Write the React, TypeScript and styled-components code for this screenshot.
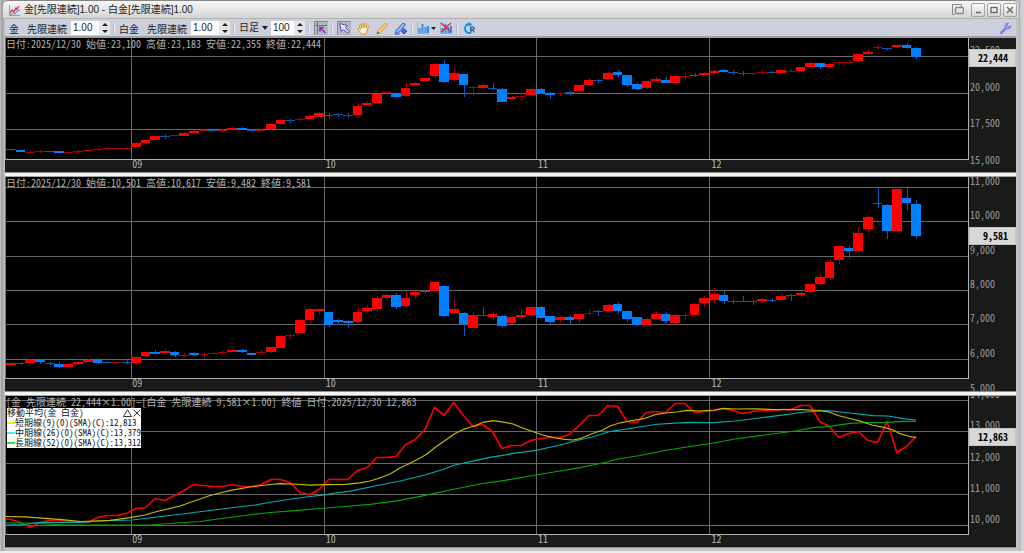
import React from "react";
import styled, { createGlobalStyle } from "styled-components";

const GlobalStyle = createGlobalStyle`
  * { box-sizing: border-box; }
  body { margin: 0; background: #cfcfd9; }
  button, input, select { font: inherit; color: inherit; padding: 0; margin: 0; border: 0; background: none; }
`;

const mono = `"Noto Sans Mono CJK JP", "Noto Sans CJK JP", monospace`;
const ui = `"Liberation Sans", "Noto Sans CJK JP", sans-serif`;

/* ---------- window frame ---------- */

const Window = styled.div`
  display: flex;
  flex-direction: column;
  height: 100vh;
  min-height: 400px;
  padding: 0 8px 4px 5px;
  background: linear-gradient(90deg, #c9c9c9 0, #9c9c9c 2px, #b9b9b9 4px, #c2c2c2 5px, #c2c2c2 calc(100% - 5px), #a4a4a4 calc(100% - 5px), #cfcfda calc(100% - 3px));
  border-bottom: 2px solid #ededed;
  font-family: ${ui};
  font-size: 10px;
  color: #222;
`;

const TitleBar = styled.header`
  display: flex;
  flex: none;
  align-items: center;
  gap: 4px;
  height: 19px;
  margin: 0 -2px;
  padding: 1px 0 0 6px;
  border-top: 1px solid #858585;
  border-bottom: 1px solid #b2b2b2;
  border-radius: 5px 5px 0 0;
  background: linear-gradient(#f6f6f6, #e6e6e6 50%, #d3d3d3);
`;

const Title = styled.h1`
  flex: 1;
  margin: 0;
  font-size: 10px;
  line-height: 16px;
  font-weight: 400;
  white-space: pre;
`;

const WindowButtons = styled.div`
  display: flex;
  align-items: center;
  gap: 2px;
  padding-right: 1px;
`;

const WindowButton = styled.button<{ $flat?: boolean }>`
  display: grid;
  place-items: center;
  width: 14px;
  height: 14px;
  margin-right: ${(p) => (p.$flat ? "4px" : "0")};
  border: ${(p) => (p.$flat ? "0" : "1px solid #a2a2a2")};
  border-radius: 2px;
  background: ${(p) => (p.$flat ? "none" : "linear-gradient(#fafafa, #d6d6d6)")};
`;

/* ---------- toolbar ---------- */

const Toolbar = styled.div`
  display: flex;
  flex: none;
  align-items: center;
  height: 19px;
  padding: 0 4px;
  background: #cdd0da;
  border-bottom: 1px solid #ececf0;
  box-shadow: inset 0 -1px #9a9da8;
`;

const Group = styled.div<{ $gap?: number }>`
  display: flex;
  align-items: center;
  gap: ${(p) => p.$gap ?? 4}px;
`;

const Divider = styled.span`
  width: 2px;
  height: 11px;
  margin: 0 4px 0 3px;
  border-left: 1px solid #b4b7c0;
  border-right: 1px solid #eceef3;
`;

const FieldLabel = styled.label`
  display: flex;
  gap: 8px;
  white-space: nowrap;
`;

const SpinBox = styled.div<{ $width: number }>`
  display: flex;
  width: ${(p) => p.$width}px;
  height: 14px;
  background: #fff;
`;

const SpinInput = styled.input`
  flex: 1;
  min-width: 0;
  padding-left: 2px;
  line-height: 12px;
`;

const SpinButtons = styled.div`
  display: flex;
  flex-direction: column;
  width: 11px;
  background: #e4e4e4;
`;

const SpinButton = styled.button`
  display: grid;
  flex: 1;
  place-items: center;
`;

const PeriodSelect = styled.select`
  appearance: none;
  width: 31px;
  height: 14px;
  line-height: 14px;
  background: url("data:image/svg+xml,%3Csvg xmlns='http://www.w3.org/2000/svg' width='6' height='4'%3E%3Cpath d='M0 0h6L3 4z' fill='%23222'/%3E%3C/svg%3E") no-repeat 23px 5px;
`;

const ToolButton = styled.button<{ $pressed?: boolean }>`
  display: grid;
  grid-auto-flow: column;
  place-items: center;
  gap: 2px;
  min-width: 14px;
  height: 14px;
  background: ${(p) => (p.$pressed ? "#b4b7c2" : "none")};
  box-shadow: ${(p) => (p.$pressed ? "inset 1px 1px #878a94" : "none")};
`;

const Spacer = styled.span`
  flex: 1;
`;

/* ---------- charts ---------- */

const Panels = styled.main`
  display: flex;
  flex: 1;
  flex-direction: column;
  gap: 5px;
  min-height: 0;
  background: #f4f4f4;
`;

const Panel = styled.section<{ $grow: number }>`
  display: grid;
  grid-template-columns: minmax(0, 1fr) 47px;
  flex: ${(p) => p.$grow} 1 0;
  min-height: 0;
  background: #1a1a1a;
  box-shadow: 0 1px #8e8e8e, 0 -1px #a4a4a4;
  font-family: ${mono};
  font-size: 10px;
  line-height: 12px;
  color: #b4b4b4;
`;

const PlotColumn = styled.div`
  display: flex;
  flex-direction: column;
  min-width: 0;
  min-height: 0;
`;

const Plot = styled.div`
  position: relative;
  flex: 1;
  min-height: 0;
  background: #000;
  border-right: 1px solid #b0b0b0;
  border-bottom: 1px solid #b0b0b0;
  border-left: 1px solid #777;
`;

const Drawing = styled.svg`
  position: absolute;
  inset: 0;
  display: block;
  width: 100%;
  height: 100%;
`;

const Caption = styled.h2`
  position: absolute;
  top: 0;
  left: 0;
  margin: 0;
  font-size: 10px;
  line-height: 12px;
  font-weight: 400;
  white-space: pre;
`;

const TimeAxis = styled.div`
  position: relative;
  flex: none;
  height: 12px;
`;

const TimeLabel = styled.span`
  position: absolute;
  top: -2px;
`;

const PriceAxis = styled.div`
  position: relative;
  overflow: hidden;
`;

const PriceLabel = styled.span`
  position: absolute;
  left: 1px;
  transform: translateY(-50%);
  color: #9c9c9c;
`;

const PriceTag = styled.strong`
  position: absolute;
  left: 0;
  right: 0;
  transform: translateY(-50%);
  padding: 2px 7px 2px 0;
  border: 1px solid #c4c4c4;
  background: #d8d8d8;
  color: #000;
  line-height: 12px;
  text-align: right;
`;

const Legend = styled.aside`
  position: absolute;
  top: 12px;
  left: 1px;
  background: #fff;
  color: #111;
  font-size: 9px;
`;

const LegendRow = styled.div`
  display: flex;
  align-items: center;
  height: 10px;
  line-height: 10px;
  white-space: pre;
`;

const LegendTitle = styled.span`
  flex: 1;
`;

const LegendButton = styled.button`
  display: grid;
  place-items: center;
  width: 9px;
  height: 9px;
`;

const Swatch = styled.span<{ $color: string }>`
  flex: none;
  width: 8px;
  height: 2px;
  background: ${(p) => p.$color};
`;

/* ---------- data ---------- */

/* Session: direction, body top, body bottom, wick top, wick bottom */
type Candle = [0 | 1, number, number, number, number];
const U = 1;
const D = 0;

const gold: Candle[] = [
  [D, 149, 150, 149, 151], [D, 150, 152, 150, 152], [U, 152, 153, 151, 153], [U, 151, 152, 150, 153], [D, 151, 152, 151, 152],
  [D, 151, 153, 151, 154], [U, 152, 153, 152, 153], [U, 151, 152, 150, 153], [U, 150, 151, 150, 151], [U, 149, 150, 148, 151],
  [U, 148, 149, 147, 149], [U, 148, 149, 148, 149], [U, 148, 149, 147, 149], [U, 143, 147, 142, 147], [U, 140, 143, 140, 143],
  [U, 136, 140, 135, 140], [D, 136, 137, 134, 139], [U, 135, 136, 135, 136], [U, 133, 136, 132, 136], [U, 131, 133, 130, 133],
  [U, 130, 131, 129, 132], [D, 130, 131, 130, 131], [U, 130, 131, 129, 132], [U, 128, 130, 127, 130], [D, 128, 130, 127, 130],
  [D, 130, 131, 129, 132], [U, 130, 131, 129, 131], [U, 124, 129, 124, 130], [U, 120, 124, 119, 125], [D, 120, 121, 119, 123],
  [U, 119, 120, 118, 121], [U, 116, 119, 115, 119], [U, 113, 117, 112, 117], [D, 115, 116, 113, 119], [D, 114, 115, 113, 117],
  [D, 115, 116, 113, 118], [U, 106, 115, 104, 115], [U, 103, 105, 101, 106], [U, 94, 103, 94, 104], [U, 92, 93, 92, 95],
  [D, 93, 97, 92, 98], [U, 88, 96, 83, 97], [U, 83, 85, 82, 86], [U, 78, 81, 78, 82], [U, 64, 76, 63, 78],
  [D, 64, 82, 60, 83], [U, 73, 80, 68, 81], [D, 74, 85, 74, 97], [U, 87, 88, 86, 96], [U, 85, 88, 83, 88],
  [D, 88, 89, 83, 90], [D, 89, 102, 88, 102], [U, 97, 99, 96, 99], [U, 96, 97, 92, 101], [U, 89, 95, 88, 96],
  [D, 89, 93, 88, 94], [D, 93, 95, 92, 99], [U, 93, 94, 92, 96], [D, 92, 93, 91, 95], [U, 85, 91, 85, 93],
  [U, 80, 85, 78, 85], [D, 80, 81, 79, 83], [U, 73, 79, 72, 80], [D, 72, 75, 70, 77], [D, 75, 85, 75, 87],
  [D, 84, 89, 82, 90], [U, 81, 88, 81, 89], [U, 79, 81, 77, 82], [D, 80, 83, 77, 83], [U, 76, 83, 75, 84],
  [U, 76, 77, 74, 80], [D, 75, 76, 73, 77], [U, 73, 75, 72, 75], [U, 71, 73, 69, 74], [D, 70, 72, 69, 73],
  [D, 72, 73, 70, 75], [D, 73, 74, 71, 76], [U, 73, 74, 73, 76], [U, 72, 73, 70, 74], [D, 72, 73, 71, 74],
  [U, 70, 73, 70, 73], [U, 71, 72, 69, 72], [U, 67, 71, 67, 72], [U, 63, 67, 62, 68], [D, 63, 67, 63, 69],
  [U, 64, 67, 63, 68], [U, 62, 63, 62, 65], [U, 62, 63, 60, 64], [U, 54, 61, 54, 62], [U, 52, 54, 49, 54],
  [U, 47, 48, 45, 49], [D, 48, 49, 48, 50], [U, 45, 47, 44, 48], [D, 45, 48, 43, 49], [D, 48, 57, 47, 59],
];

const platinum: Candle[] = [
  [U, 363, 365, 362, 366], [D, 363, 364, 362, 365], [U, 360, 363, 359, 364], [D, 360, 362, 359, 364], [D, 363, 364, 362, 365],
  [D, 364, 367, 362, 368], [U, 364, 367, 363, 367], [U, 362, 364, 361, 365], [U, 360, 362, 359, 362], [D, 360, 363, 360, 364],
  [D, 362, 363, 361, 363], [U, 362, 363, 362, 363], [D, 362, 363, 360, 364], [U, 357, 363, 357, 364], [U, 352, 356, 352, 357],
  [D, 352, 354, 350, 354], [U, 351, 353, 348, 354], [D, 352, 355, 351, 357], [U, 355, 356, 353, 357], [D, 353, 355, 352, 356],
  [U, 354, 355, 353, 358], [U, 353, 354, 352, 354], [U, 352, 353, 351, 354], [U, 350, 352, 350, 352], [D, 350, 352, 349, 353],
  [D, 353, 355, 353, 356], [U, 352, 353, 350, 353], [U, 347, 352, 347, 353], [U, 336, 348, 335, 348], [U, 335, 336, 334, 339],
  [U, 320, 333, 319, 333], [U, 309, 320, 308, 323], [U, 309, 311, 308, 315], [D, 312, 325, 311, 327], [D, 320, 322, 319, 325],
  [D, 321, 323, 320, 328], [U, 312, 322, 308, 323], [U, 308, 311, 305, 313], [U, 298, 309, 296, 311], [U, 295, 298, 294, 300],
  [D, 295, 307, 293, 309], [U, 298, 306, 291, 307], [U, 292, 295, 291, 299], [D, 291, 292, 290, 294], [U, 282, 291, 282, 291],
  [D, 286, 316, 285, 317], [U, 309, 313, 300, 314], [D, 313, 324, 312, 336], [U, 315, 328, 312, 330], [D, 315, 316, 307, 316],
  [U, 314, 317, 312, 320], [D, 316, 326, 315, 328], [U, 317, 323, 316, 324], [U, 315, 317, 310, 319], [U, 307, 315, 306, 316],
  [D, 307, 318, 306, 319], [D, 316, 322, 316, 326], [U, 317, 320, 316, 323], [D, 317, 320, 315, 325], [U, 314, 319, 314, 323],
  [U, 313, 314, 309, 316], [D, 311, 312, 310, 316], [U, 305, 311, 304, 312], [D, 304, 311, 302, 314], [D, 311, 319, 310, 322],
  [D, 317, 325, 317, 326], [U, 319, 325, 317, 325], [U, 314, 319, 312, 320], [D, 314, 321, 312, 323], [U, 315, 323, 314, 325],
  [U, 315, 316, 313, 319], [U, 304, 315, 303, 315], [U, 298, 303, 296, 307], [U, 294, 300, 288, 303], [D, 295, 301, 291, 304],
  [D, 301, 302, 299, 304], [D, 301, 302, 296, 302], [D, 301, 302, 300, 305], [U, 299, 301, 298, 303], [D, 300, 301, 298, 302],
  [U, 296, 300, 293, 301], [D, 295, 296, 294, 301], [U, 293, 295, 291, 297], [U, 284, 292, 283, 293], [U, 277, 284, 274, 286],
  [U, 262, 278, 259, 280], [U, 246, 260, 246, 264], [D, 248, 251, 246, 259], [U, 233, 251, 227, 252], [U, 217, 229, 215, 233],
  [D, 203, 204, 187, 208], [D, 205, 231, 204, 239], [U, 189, 231, 189, 232], [D, 198, 203, 186, 210], [D, 204, 236, 200, 239],
];

const spread = [
  519, 522, 527, 522, 520, 520, 521, 521, 522, 517, 515, 515, 513, 508, 507, 498, 500, 495, 490, 484,
  485, 486, 486, 484, 486, 486, 484, 479, 479, 482, 492, 494, 489, 479, 479, 479, 470, 467, 457, 457,
  456, 444, 439, 429, 407, 415, 402, 415, 426, 424, 431, 448, 445, 445, 440, 438, 437, 437, 434, 425,
  415, 415, 405, 406, 421, 422, 412, 411, 412, 403, 403, 412, 411, 410, 408, 410, 413, 411, 410, 410,
  409, 409, 405, 405, 421, 426, 437, 433, 431, 440, 442, 421, 452, 446, 436,
];

const shortAverage =
  "6,516.5 25,516.8 45,518.3 62,519.7 80,521.5 95,521 110,520.3 130,517.7 145,515 157,511.5 180,506 195,500.7 210,495.5 220,493 232,490.2 250,487 270,484.5 280,483.7 292,484 310,485.2 325,484.7 345,484.3 360,482.8 370,481 379,478.3 390,474 400,468 410,463.3 420,458 427,454 435,447.5 445,440.5 455,433.5 465,428.8 475,425.7 483,422.3 493,420.7 505,422.3 513,424 523,428.3 535,432.3 545,435.7 556,438 565,439.3 573,440 580,438.7 590,434.5 602,430.3 610,426 620,422.8 630,421 645,418.3 655,414.7 665,413 677,412 687,410.3 700,411 715,410 723,408.3 735,409 755,408.8 775,409.7 800,409.7 820,410.5 829,412 838,415.5 848,418 862,421.7 872,425 885,427.7 893,430 900,433.7 908,436 916,437.7";
const middleAverage =
  "6,525 25,524.5 38,522.5 55,522.5 80,522.3 100,521 132,520 157,517 182,514 206,511 230,508 255,505 275,501.5 295,498.5 310,496.5 325,494.8 335,493 350,491.2 380,485 400,481 425,475 445,468.8 455,465 470,461.7 490,457.3 515,453.2 536,450.3 560,445 575,441 592,437 609,431.7 630,428.5 655,424.5 670,423.3 690,422.3 714,422.7 735,421 760,418 780,415.3 805,412 827,410.7 850,413 873,415.7 888,416 903,418.7 916,420";
const longAverage =
  "6,523 30,523 65,525 150,525 162,524 200,521.5 225,518 245,515.5 270,512.5 295,510.7 320,508.5 345,506.5 370,504.3 400,500.3 425,495.3 450,490 480,484 505,480.3 536,475 560,471 580,467.7 605,462.5 618,459 640,455.5 665,450.5 690,446.5 714,443 735,439 765,435 795,431 813,427.7 830,426.3 850,423.3 870,422.5 885,422.3 905,421.3 916,421.3";

const months = [
  { label: "09", x: 131 },
  { label: "10", x: 324 },
  { label: "11", x: 536 },
  { label: "12", x: 709 },
];

const LEFT = 6;
const WIDTH = 962;
const STEP = 9.63;

interface ChartProps {
  caption: string;
  top: number;
  height: number;
  prices: { text: string; line: number }[];
  last: { text: string; y: number };
  overlay?: React.ReactNode;
  children: React.ReactNode;
}

const AXIS_HEIGHT = 13;
const LABEL_RISE = 6;

function Chart({ caption, top, height, prices, last, overlay, children }: ChartProps) {
  const total = height + AXIS_HEIGHT;
  const at = (y: number) => `${((y - top) / total) * 100}%`;
  return (
    <Panel $grow={total}>
      <PlotColumn>
        <Plot>
          <Drawing viewBox={`${LEFT} ${top} ${WIDTH} ${height}`} preserveAspectRatio="none" role="img" aria-label={caption}>
            <g stroke="#686868" shapeRendering="crispEdges">
              {prices.map((p) => (
                <line key={p.text} x1={LEFT} x2={LEFT + WIDTH} y1={p.line + 0.5} y2={p.line + 0.5} />
              ))}
              {months.map((m) => (
                <line key={m.label} x1={m.x + 0.5} x2={m.x + 0.5} y1={top} y2={top + height} />
              ))}
            </g>
            {children}
          </Drawing>
          <Caption>{caption}</Caption>
          {overlay}
        </Plot>
        <TimeAxis>
          {months.map((m) => (
            <TimeLabel key={m.label} style={{ left: `${((m.x - LEFT + 2) / WIDTH) * 100}%` }}>
              {m.label}
            </TimeLabel>
          ))}
        </TimeAxis>
      </PlotColumn>
      <PriceAxis>
        {prices.map((p) => (
          <PriceLabel key={p.text} style={{ top: at(p.line - LABEL_RISE) }}>
            {p.text}
          </PriceLabel>
        ))}
        <PriceTag style={{ top: at(last.y) }}>{last.text}</PriceTag>
      </PriceAxis>
    </Panel>
  );
}

function Candles({ data }: { data: Candle[] }) {
  return (
    <g shapeRendering="crispEdges">
      {data.map(([up, bodyTop, bodyBottom, high, low], i) => {
        const x = LEFT + Math.round(i * STEP);
        const next = LEFT + Math.round((i + 1) * STEP);
        const thin = bodyBottom - bodyTop < 2;
        const soft = up ? "#a80000" : "#005cb8";
        const full = up ? "#ff0000" : "#0080ff";
        return (
          <React.Fragment key={i}>
            <rect x={x + 5} y={high} width={1} height={low - high} fill={soft} />
            <rect x={x} y={bodyTop} width={next - x} height={bodyBottom - bodyTop} fill={thin ? soft : full} />
          </React.Fragment>
        );
      })}
    </g>
  );
}

/* ---------- toolbar parts ---------- */

function Spinner({ id, value, width }: { id: string; value: string; width: number }) {
  return (
    <SpinBox $width={width}>
      <SpinInput id={id} defaultValue={value} aria-label={id === "count" ? "本数" : undefined} />
      <SpinButtons>
        <SpinButton aria-label="増やす">
          <svg width="6" height="3"><path d="M0 3h6L3 0z" fill="#222" /></svg>
        </SpinButton>
        <SpinButton aria-label="減らす">
          <svg width="6" height="3"><path d="M0 0h6L3 3z" fill="#222" /></svg>
        </SpinButton>
      </SpinButtons>
    </SpinBox>
  );
}

function Bars() {
  return (
    <>
      <path d="M.5 0v11.500H12" fill="none" stroke="#9fb4d0" />
      <path d="M2.500 11V6M5.500 11V2M8.500 11V5M11 11V4" stroke="#2e8ef0" strokeWidth="2" />
    </>
  );
}

export default function App() {
  return (
    <Window>
      <GlobalStyle />
      <TitleBar>
        <svg width="11" height="11" viewBox="0 0 11 11" fill="none">
          <path d="M.5 0v10.500H11" stroke="#9a9a9a" />
          <path d="M1 8l2-3 2 2 2-4 1 1 2-3" stroke="#e0303c" strokeWidth="1.300" />
          <path d="M1 10l3-2 2 1 2-3 3-1" stroke="#5c7fd0" />
        </svg>
        <Title>金[先限連続]1.00 - 白金[先限連続]1.00</Title>
        <WindowButtons>
          <WindowButton $flat aria-label="ウィンドウ切替">
            <svg width="12" height="12" fill="none" stroke="#8a8a8a"><path d="M9.500 3V.5H.5v10H3" /><rect x="3.500" y="3.500" width="8" height="6" rx="1" strokeWidth="1.500" /></svg>
          </WindowButton>
          <WindowButton aria-label="最小化">
            <svg width="8" height="8"><path d="M2 6.500h5" stroke="#666" strokeWidth="1.500" /></svg>
          </WindowButton>
          <WindowButton aria-label="最大化">
            <svg width="8" height="8"><rect x="1" y="1.500" width="6" height="5" fill="none" stroke="#666" strokeWidth="1.300" /></svg>
          </WindowButton>
          <WindowButton aria-label="閉じる">
            <svg width="8" height="8"><path d="M1 1l6 6M7 1L1 7" stroke="#666" strokeWidth="1.300" /></svg>
          </WindowButton>
        </WindowButtons>
      </TitleBar>

      <Toolbar>
        <Group>
          <FieldLabel htmlFor="gold"><span>金</span><span>先限連続</span></FieldLabel>
          <Spinner id="gold" value="1.00" width={39} />
        </Group>
        <Divider />
        <Group>
          <FieldLabel htmlFor="platinum"><span>白金</span><span>先限連続</span></FieldLabel>
          <Spinner id="platinum" value="1.00" width={39} />
        </Group>
        <Divider />
        <Group $gap={1}>
          <PeriodSelect aria-label="足種" defaultValue="日足">
            <option>日足</option>
            <option>週足</option>
          </PeriodSelect>
          <Spinner id="count" value="100" width={34} />
        </Group>
        <Divider />
        <ToolButton $pressed aria-label="十字カーソル">
          <svg width="12" height="12" fill="none" stroke="#6d55b8"><path d="M0 3.500h12M2.500 0v12" stroke="#6b72a8" /><path d="M5 9.500V5.500h4M5.500 6l5 5" stroke="#8a32b0" strokeWidth="1.700" /></svg>
        </ToolButton>
        <Divider />
        <Group $gap={5}>
          <ToolButton $pressed aria-label="選択">
            <svg width="12" height="12"><path d="M1.500 1.500l8 2-2 2 3.500 4-1.500 1.500-4-3.500-2 2z" fill="#e4e0f8" stroke="#5a50b4" /></svg>
          </ToolButton>
          <ToolButton aria-label="移動">
            <svg width="13" height="13"><path d="M4 12C3 10 1 8 1 6.500c1-.6 2 0 2.500 1L2.500 3c.8-.8 1.500-.3 1.800.5L5 6V1.500c.6-.8 1.400-.6 1.600.2L7 5.500l1-4c.8-.5 1.400 0 1.300.8L9 6l1.500-2.500c.8-.3 1.300.2 1 1L10 9l-1 3z" fill="#fff3d8" stroke="#d39428" /></svg>
          </ToolButton>
          <ToolButton aria-label="ペン">
            <svg width="13" height="13"><path d="M1 12l1-3.500L9.500 1l2 2L4 10.800z" fill="#ffcf70" stroke="#d58f28" /><path d="M1 12l.8-2.500 1.500 1.500z" fill="#6b4718" /></svg>
          </ToolButton>
          <ToolButton aria-label="線の編集">
            <svg width="14" height="13"><path d="M1 12l1.500-4L9 1l2.500 1.500L6 9.500z" fill="#8fb8f4" stroke="#3b63bd" /><path d="M1 12h5" stroke="#3b63bd" /><path d="M10 6.500l2.800 2.800L10 12 7.300 9.300z" fill="#4b68cf" stroke="#2f4aa8" /></svg>
          </ToolButton>
        </Group>
        <Divider />
        <Group $gap={3}>
          <ToolButton aria-label="テクニカル" aria-haspopup="menu">
            <svg width="12" height="12"><Bars /></svg>
            <svg width="5" height="3"><path d="M0 0h5L2.500 3z" fill="#222" /></svg>
          </ToolButton>
          <ToolButton aria-label="テクニカル削除">
            <svg width="12" height="12"><Bars /><path d="M1 1l10 9M11 1L1 10" stroke="#e02c40" strokeWidth="1.400" /></svg>
          </ToolButton>
        </Group>
        <Divider />
        <ToolButton aria-label="更新">
          <svg width="13" height="13" fill="none"><path d="M8 10.800A4.400 4.400 0 1 1 5 2.300h2" stroke="#1c90e4" strokeWidth="2" /><path d="M5.500 0L9.500 2.300 5.500 4.800z" fill="#1c90e4" /><path d="M7.800 10.500V5.200h2a1.300 1.300 0 0 1 0 2.600H8M9.800 8l1.400 2.500" stroke="#1568bc" strokeWidth="1.400" /></svg>
        </ToolButton>
        <Spacer />
        <ToolButton aria-label="設定">
          <svg width="13" height="13" fill="none"><path d="M1.500 11.500l6-6" stroke="#7f7fee" strokeWidth="2.500" /><path d="M9.500 1A3 3 0 1 0 12 4L9.500 5 8 3.500z" fill="#a9a9fa" stroke="#7474e6" /></svg>
        </ToolButton>
      </Toolbar>

      <Panels>
        <Chart
          caption="日付:2025/12/30 始値:23,100 高値:23,183 安値:22,355 終値:22,444"
          top={38}
          height={121}
          prices={[
            { text: "22,500", line: 56 },
            { text: "20,000", line: 93 },
            { text: "17,500", line: 129 },
            { text: "15,000", line: 166 },
          ]}
          last={{ text: "22,444", y: 58 }}
        >
          <Candles data={gold} />
        </Chart>
        <Chart
          caption="日付:2025/12/30 始値:10,501 高値:10,617 安値:9,482 終値:9,581"
          top={177}
          height={201}
          prices={[
            { text: "11,000", line: 187 },
            { text: "10,000", line: 221 },
            { text: "9,000", line: 256 },
            { text: "8,000", line: 290 },
            { text: "7,000", line: 324 },
            { text: "6,000", line: 359 },
            { text: "5,000", line: 394 },
          ]}
          last={{ text: "9,581", y: 236 }}
        >
          <Candles data={platinum} />
        </Chart>
        <Chart
          caption="[金 先限連続 22,444×1.00]−[白金 先限連続 9,581×1.00] 終値 日付:2025/12/30 12,863"
          top={396}
          height={138}
          prices={[
            { text: "14,000", line: 400 },
            { text: "13,000", line: 431 },
            { text: "12,000", line: 463 },
            { text: "11,000", line: 494 },
            { text: "10,000", line: 525 },
          ]}
          last={{ text: "12,863", y: 437 }}
          overlay={
            <Legend>
              <LegendRow>
                <LegendTitle>移動平均(金 白金)</LegendTitle>
                <LegendButton aria-label="たたむ">
                  <svg width="9" height="8"><path d="M4.500 .7L8.500 7.500h-8z" fill="none" stroke="#333" /></svg>
                </LegendButton>
                <LegendButton aria-label="凡例を閉じる">
                  <svg width="8" height="8"><path d="M.5 .5l7 7M7.500 .5l-7 7" stroke="#333" /></svg>
                </LegendButton>
              </LegendRow>
              <LegendRow><Swatch $color="#f0f000" />短期線(9)(0)(SMA)(C):12,813</LegendRow>
              <LegendRow><Swatch $color="#40f0f0" />中期線(26)(0)(SMA)(C):13,379</LegendRow>
              <LegendRow><Swatch $color="#30e030" />長期線(52)(0)(SMA)(C):13,312</LegendRow>
            </Legend>
          }
        >
          <g fill="none" strokeLinejoin="round">
            <polyline
              points={`${LEFT},519 ` + spread.map((y, i) => `${LEFT + (i + 0.5) * STEP},${y + 0.5}`).join(" ")}
              stroke="#f80000"
              strokeWidth="1.700"
            />
            <polyline points={longAverage} stroke="#00a800" strokeWidth="1.200" />
            <polyline points={middleAverage} stroke="#00acac" strokeWidth="1.200" />
            <polyline points={shortAverage} stroke="#c4bc00" strokeWidth="1.200" />
          </g>
        </Chart>
      </Panels>
    </Window>
  );
}
